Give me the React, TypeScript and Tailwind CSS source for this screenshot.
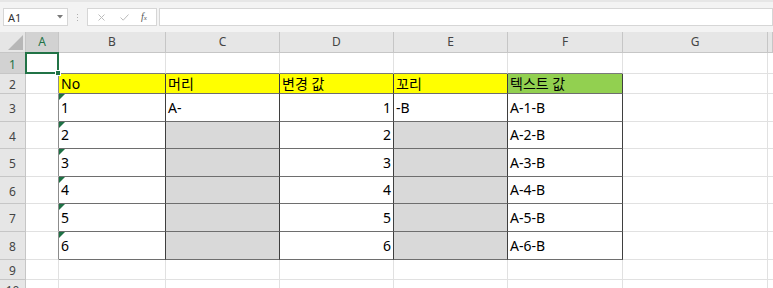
import React from "react";

const FONT = { fontFamily: '"Noto Sans", "Noto Sans CJK KR", sans-serif' };

type CellDef = {
  text?: string;
  bg?: string;
  right?: boolean;
  tri?: boolean;
};

const colLetters = ["A", "B", "C", "D", "E", "F", "G", ""];
const rowHeights = ["h-[21px]", "h-[20px]", "h-[28px]", "h-[27px]", "h-[28px]", "h-[27px]", "h-[28px]", "h-[28px]", "h-[20px]", "h-[20px]"];

function tableRows(): CellDef[][] {
  const rows: CellDef[][] = [];
  rows.push([
    { text: "No", bg: "bg-[#ffff00]" },
    { text: "머리", bg: "bg-[#ffff00]" },
    { text: "변경 값", bg: "bg-[#ffff00]" },
    { text: "꼬리", bg: "bg-[#ffff00]" },
    { text: "텍스트 값", bg: "bg-[#92d050]" },
  ]);
  for (let i = 1; i <= 6; i++) {
    rows.push([
      { text: String(i), tri: true, bg: "bg-white" },
      { text: i === 1 ? "A-" : "", bg: i === 1 ? "bg-white" : "bg-[#d9d9d9]" },
      { text: String(i), right: true, bg: "bg-white" },
      { text: i === 1 ? "-B" : "", bg: i === 1 ? "bg-white" : "bg-[#d9d9d9]" },
      { text: `A-${i}-B`, bg: "bg-white" },
    ]);
  }
  return rows;
}

function Toolbar() {
  return (
    <div className="h-[32px] bg-[#f3f3f3] border-t-2 border-[#e6e6e6] flex items-start pt-[6px] pl-[3px]">
      <div className="w-[65px] h-[18px] bg-white border border-[#d6d6d6] flex items-center justify-between pl-[4px] pr-[4px]">
        <span className="text-[11px] text-[#333] leading-none">A1</span>
        <svg width="6" height="4" viewBox="0 0 6 4"><path d="M0 0 L6 0 L3 3.5 Z" fill="#7a7a7a" /></svg>
      </div>
      <div className="w-[19px] h-[18px] flex flex-col items-center justify-center gap-[2px]">
        <div className="w-[1px] h-[1px] bg-[#b0b0b0]" />
        <div className="w-[1px] h-[1px] bg-[#b0b0b0]" />
        <div className="w-[1px] h-[1px] bg-[#b0b0b0]" />
      </div>
      <div className="w-[70px] h-[18px] bg-white border border-[#d6d6d6] flex items-center">
        <svg className="ml-[10px]" width="7" height="7" viewBox="0 0 7 7"><path d="M0.5 0.5 L6.5 6.5 M6.5 0.5 L0.5 6.5" stroke="#bcbcbc" strokeWidth="1" /></svg>
        <svg className="ml-[15px]" width="9" height="7" viewBox="0 0 9 7"><path d="M0.5 3.5 L3.2 6.2 L8.5 0.5" stroke="#bcbcbc" strokeWidth="1" fill="none" /></svg>
        <span className="ml-[12px] text-[10px] italic text-[#555] leading-none" style={{ fontFamily: '"Liberation Serif", serif' }}>
          f<span className="text-[7px]">x</span>
        </span>
      </div>
      <div className="ml-[2px] flex-1 h-[18px] bg-white border border-[#d6d6d6]" />
    </div>
  );
}

function ColHeader() {
  return (
    <div className="flex h-[21px]">
      <div className="w-[26px] shrink-0 bg-[#e6e6e6] border-r border-b border-[#c6c6c6] relative overflow-hidden">
        <div className="absolute right-[2px] bottom-[2px] w-0 h-0 border-l-[15px] border-l-transparent border-b-[15px] border-b-[#b7b7b7]" />
      </div>
      {colLetters.map((l, i) => {
        const widths = ["w-[33px]", "w-[107px]", "w-[114px]", "w-[114px]", "w-[114px]", "w-[115px]", "w-[145px]", "flex-1"];
        const sel = i === 0;
        return (
          <div
            key={i}
            className={`${widths[i]} shrink-0 flex items-center justify-center text-[12px] border-r border-b ${sel ? "bg-[#d2d2d2] text-[#217346] border-b-[#9b9b9b] border-r-[#c6c6c6]" : "bg-[#e6e6e6] text-[#444] border-[#c6c6c6]"}`}
          >
            {l}
          </div>
        );
      })}
    </div>
  );
}

function RowHeader({ n, h }: { n: number; h: string }) {
  const sel = n === 1;
  return (
    <div
      className={`w-[26px] shrink-0 ${h} flex items-center justify-center text-[12px] border-r border-b ${sel ? "bg-[#d2d2d2] text-[#217346] border-r-[#9b9b9b] border-b-[#c6c6c6]" : "bg-[#e6e6e6] text-[#444] border-[#c6c6c6]"}`}
    >
      <span className="pt-[3px]">{n}</span>
    </div>
  );
}

function Sheet() {
  const data = tableRows();
  const tableWidths = ["w-[107px]", "w-[114px]", "w-[114px]", "w-[114px]", "w-[115px]"];
  return (
    <div>
      {rowHeights.map((h, ri) => {
        const rowNum = ri + 1;
        const inTable = rowNum >= 2 && rowNum <= 8;
        const tableRow = inTable ? data[rowNum - 2] : null;
        return (
          <div key={rowNum} className="flex">
            <RowHeader n={rowNum} h={h} />
            {/* Column A */}
            <div
              className={`w-[33px] shrink-0 ${h} bg-white border-b border-r ${inTable ? "border-b-[#e1e1e1] border-r-[#8c8c8c]" : "border-[#e1e1e1]"} relative`}
            >
              {rowNum === 1 && (
                <div className="absolute -left-[1px] -top-[1px] -right-[1px] -bottom-[1px] border-2 border-[#217346] z-10">
                  <div className="absolute -right-[4px] -bottom-[4px] w-[6px] h-[6px] bg-[#217346] border border-white" />
                </div>
              )}
            </div>
            {/* Columns B-F */}
            {tableWidths.map((w, ci) => {
              const cell = tableRow ? tableRow[ci] : null;
              if (!cell) {
                const darkBottom = rowNum === 1;
                return (
                  <div
                    key={ci}
                    className={`${w} shrink-0 ${h} bg-white border-b border-r ${darkBottom ? "border-b-[#7a7a7a] border-r-[#e1e1e1]" : "border-[#e1e1e1]"}`}
                  />
                );
              }
              return (
                <div
                  key={ci}
                  className={`${w} shrink-0 ${h} ${cell.bg} border-b border-r border-b-[#6e6e6e] border-r-[#3f3f3f] relative flex items-center px-[2px] ${cell.right ? "justify-end" : "justify-start"}`}
                >
                  {cell.tri && (
                    <div className="absolute left-0 top-0 w-0 h-0 border-t-[6px] border-t-[#1e7145] border-r-[6px] border-r-transparent" />
                  )}
                  <span className="text-[14px] leading-[18px] text-black whitespace-nowrap">{cell.text}</span>
                </div>
              );
            })}
            {/* Column G */}
            <div className={`w-[145px] shrink-0 ${h} bg-white border-b border-r border-[#e1e1e1]`} />
            <div className={`flex-1 ${h} bg-white border-b border-[#e1e1e1]`} />
          </div>
        );
      })}
    </div>
  );
}

export default function App() {
  return (
    <div className="w-[773px] h-[288px] overflow-hidden bg-white" style={FONT}>
      <Toolbar />
      <ColHeader />
      <Sheet />
    </div>
  );
}
